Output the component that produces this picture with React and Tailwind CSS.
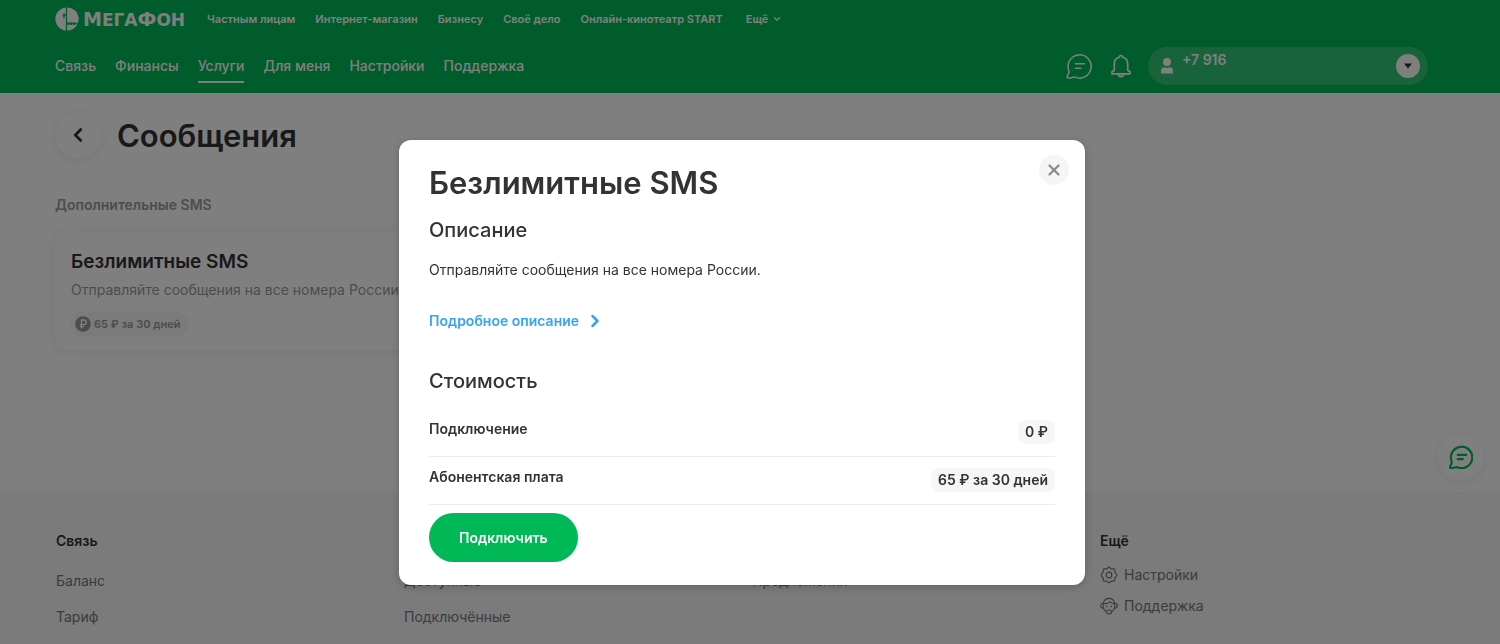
import React, { useState } from 'react';
import { ChevronDown, ChevronLeft, ChevronRight, X } from 'lucide-react';

const topLinks = ['Частным лицам', 'Интернет-магазин', 'Бизнесу', 'Своё дело', 'Онлайн-кинотеатр START'];

const mainLinks = ['Связь', 'Финансы', 'Услуги', 'Для меня', 'Настройки', 'Поддержка'];

const footerColumns = [
  { title: 'Связь', links: ['Баланс', 'Тариф'] },
  { title: 'Услуги', links: ['Доступные', 'Подключённые'] },
  { title: 'Для меня', links: ['Предложения'] },
];

const prices = [
  { label: 'Подключение', value: '0 ₽' },
  { label: 'Абонентская плата', value: '65 ₽ за 30 дней' },
];

const ChatIcon = ({ className, strokeWidth = 1.5 }) => (
  <svg viewBox="0 0 26 26" fill="none" stroke="currentColor" strokeWidth={strokeWidth} strokeLinecap="round" strokeLinejoin="round" className={className}>
    <path d="M2.8 17.6A11.6 11.6 0 1 1 9 24.1C7.5 23.5 5 25.2 2.2 25 1 24.9.8 24 1.3 23.1 2.5 21.3 3.6 19.6 2.8 17.6Z" />
    <path d="M9.5 10.8h9M9.5 15.3h5.5" />
  </svg>
);

const BellIcon = ({ className }) => (
  <svg viewBox="0 0 20 24" fill="none" stroke="currentColor" strokeWidth="1.7" strokeLinejoin="round" className={className}>
    <path d="M8.3 3.2a1.7 1.7 0 0 1 3.4 0c3.2.8 5 3.3 5 6.6v6.4l2.300 1.5v2.1H1v-2.1l2.3-1.5V9.8c0-3.3 1.8-5.8 5-6.6Z" />
    <path d="M7.3 19.8a2.7 2.9 0 0 0 5.4 0" />
  </svg>
);

const UserIcon = ({ className }) => (
  <svg viewBox="0 0 12 16" fill="currentColor" className={className}>
    <circle cx="6" cy="4" r="3.9" />
    <path d="M0 15.5V13c0-2.500 1.500-3.700 3.300-3.700 1.800.8 3.600.8 5.400 0 1.800 0 3.300 1.200 3.300 3.700v2.500Z" />
  </svg>
);

const GearIcon = ({ className }) => (
  <svg viewBox="0 0 18 18" fill="none" stroke="currentColor" strokeWidth="1.2" strokeLinejoin="round" className={className}>
    <path d="M9 1.2c1.2 0 1.5 1.4 2.6 1.7 1 .3 2.1-.6 2.9.2s-.1 1.9.3 2.900c.4 1 2 1.600 2 3s-1.600 2-2 3c-.4 1 .5 2.100-.3 2.900s-1.900-.1-2.900.2c-1.100.3-1.400 1.700-2.600 1.700s-1.500-1.400-2.600-1.700c-1-.3-2.100.6-2.900-.2s.1-1.900-.3-2.900c-.4-1-2-1.600-2-3s1.600-2 2-3c.4-1-.5-2.100.3-2.900s1.900.1 2.900-.2C7.5 2.6 7.8 1.2 9 1.2Z" />
    <circle cx="9" cy="9" r="2.8" />
  </svg>
);

const SupportIcon = ({ className }) => (
  <svg viewBox="0 0 18 18" fill="none" stroke="currentColor" strokeWidth="1.1" strokeLinecap="round" className={className}>
    <path d="M3.3 6.5C3.8 3.4 6 1.4 9 1.4s5.2 2 5.7 5.1" />
    <path d="M3.3 6.2C1.6 6.2.7 7.3.7 8.7s.9 2.5 2.6 2.5ZM14.7 6.2c1.7 0 2.6 1.1 2.6 2.5s-.9 2.5-2.6 2.5Z" />
    <path d="M3.9 6.6c3.6.2 5-.7 6-1.7 1 1.2 2.5 1.7 4.6 1.7M14.4 11.2c-.5 2.2-1.5 3.2-3 3.8M3.6 11.2c.4 1.500 1 2.400 2 3.100" />
    <ellipse cx="9" cy="14.9" rx="2.5" ry="1.9" />
    <path d="M6.7 9.3v.2M11.3 9.3v.2" strokeWidth="1.6" />
  </svg>
);

const RubleIcon = ({ className }) => (
  <svg viewBox="0 0 16 16" className={className}>
    <circle cx="8" cy="8" r="7.8" fill="currentColor" />
    <path d="M6.5 12.5V4h2.3a2.2 2.2 0 0 1 0 4.6h-4M4.8 10.6H9" fill="none" stroke="#fff" strokeWidth="1.4" />
  </svg>
);

const Logo = () => (
  <a href="#" className="flex items-center gap-1 text-white">
    <svg viewBox="0 0 24 24" className="size-6">
      <circle cx="12" cy="12" r="11.6" fill="currentColor" />
      <path d="M11.5 0v8M11.500 13v11M9 8v3.500" stroke="#00b956" strokeWidth="1.2" />
      <path d="M11.500 7v6.500" stroke="#00b956" strokeWidth="1.2" />
      <circle cx="9.2" cy="8" r="1.5" fill="#00b956" />
      <path d="M11.5 16.6h11" stroke="#00b956" strokeWidth="1" />
      <path d="M12.5 16.6h9" stroke="#00b956" strokeWidth="2.6" strokeDasharray="2 .8" />
    </svg>
    <span className="font-['DejaVu_Sans',sans-serif] text-[17px] leading-6 font-bold">
      <span className="text-[19px] leading-6">М</span>ЕГА<span className="text-[19px] leading-6">Ф</span>ОН
    </span>
  </a>
);

const Header = () => (
  <header className="bg-[#00b956] pr-[72px] pb-2 pl-[55px] text-white">
    <div className="flex h-[38px] items-center">
      <Logo />
      <nav className="ml-[22px] flex items-center gap-5 text-[11px] font-semibold">
        {topLinks.map((link) => (
          <a key={link} href="#">{link}</a>
        ))}
        <button type="button" className="ml-[3px] flex items-center gap-1">
          Ещё <ChevronDown size={10} strokeWidth={3} />
        </button>
      </nav>
    </div>
    <div className="mt-[9px] flex h-[38px] items-center">
      <nav className="flex flex-1 gap-[19px] text-sm font-medium">
        {mainLinks.map((link) => (
          <a
            key={link}
            href="#"
            className={`flex h-[34px] items-center border-y-2 border-t-transparent ${
              link === 'Услуги' ? 'border-b-white' : 'border-b-transparent'
            }`}
          >
            {link}
          </a>
        ))}
      </nav>
      <button type="button" aria-label="Чат">
        <ChatIcon className="size-[26px]" />
      </button>
      <button type="button" aria-label="Уведомления" className="mr-[17px] ml-[19px]">
        <BellIcon className="h-6 w-5" />
      </button>
      <button type="button" className="flex h-[38px] w-[280px] items-center rounded-full bg-white/20 pr-2 pl-[13px]">
        <UserIcon className="h-4 w-3" />
        <span className="ml-[9px] flex-1 pb-3 text-left text-sm font-semibold">+7 916</span>
        <span className="flex size-6 items-center justify-center rounded-full bg-white text-[#333]">
          <svg viewBox="0 0 8 6" className="h-[6px] w-2" fill="currentColor">
            <path d="M0 .5h8l-4 5Z" />
          </svg>
        </span>
      </button>
    </div>
  </header>
);

const Services = () => (
  <main className="pt-[19px] pr-[72px] pb-[142px] pl-[55px]">
    <div className="flex items-center gap-4">
      <button type="button" aria-label="Назад" className="flex size-[46px] items-center justify-center rounded-full bg-white shadow-[0_2px_12px_rgba(0,0,0,0.08)]">
        <ChevronLeft size={22} strokeWidth={3} />
      </button>
      <h1 className="pt-[2px] text-[31px] leading-10 font-semibold">Сообщения</h1>
    </div>
    <h2 className="mt-[35px] text-sm leading-6 font-semibold text-[#999]">Дополнительные SMS</h2>
    <div className="mt-[14px] grid grid-cols-2 gap-5">
      <article className="rounded-xl bg-white px-4 pt-[19px] pb-[14px] shadow-[0_1px_12px_rgba(0,0,0,0.08)]">
        <h3 className="text-[19px] leading-6 font-semibold">Безлимитные SMS</h3>
        <p className="mt-1 text-sm leading-6 text-[#999]">Отправляйте сообщения на все номера России.</p>
        <div className="mt-[10px] flex h-6 w-fit items-center gap-[3px] rounded-lg bg-[#f6f6f6] pr-2 pl-1 text-[11px] font-semibold text-[#999]">
          <RubleIcon className="size-4" />
          65 ₽ за 30 дней
        </div>
      </article>
    </div>
  </main>
);

const Footer = () => (
  <footer className="grid flex-1 grid-cols-4 gap-5 bg-[#f6f6f6] pt-[37px] pr-[72px] pb-4 pl-14">
    {footerColumns.map((column) => (
      <div key={column.title}>
        <h4 className="text-sm leading-6 font-semibold">{column.title}</h4>
        <ul className="mt-4 space-y-3 text-sm leading-6 text-[#777]">
          {column.links.map((link) => (
            <li key={link}><a href="#">{link}</a></li>
          ))}
        </ul>
      </div>
    ))}
    <div>
      <h4 className="text-sm leading-6 font-semibold">Ещё</h4>
      <ul className="mt-[10px] space-y-[7px] text-sm leading-6 text-[#777]">
        <li><a href="#" className="flex items-center gap-[6px]"><GearIcon className="size-[18px]" />Настройки</a></li>
        <li><a href="#" className="flex items-center gap-[6px]"><SupportIcon className="size-[18px]" />Поддержка</a></li>
      </ul>
    </div>
  </footer>
);

const ServiceModal = ({ onClose }) => (
  <div className="fixed inset-0 z-10 flex items-start justify-center bg-black/50 pt-[140px] pr-4">
    <div role="dialog" aria-modal="true" aria-labelledby="service-title" className="relative w-full max-w-[686px] rounded-xl bg-white px-[30px] pt-[23px] pb-[23px] shadow-[0_2px_10px_rgba(0,0,0,0.2)]">
      <button type="button" aria-label="Закрыть" onClick={onClose} className="absolute top-[15px] right-4 flex size-[30px] items-center justify-center rounded-full bg-[#f5f5f5] text-[#8c8c8c]">
        <X size={18} strokeWidth={3} />
      </button>
      <h2 id="service-title" className="text-[31px] leading-10 font-semibold">Безлимитные SMS</h2>
      <h3 className="mt-[15px] text-xl leading-6 font-medium">Описание</h3>
      <p className="mt-4 text-sm leading-6">Отправляйте сообщения на все номера России.</p>
      <a href="#" className="mt-[27px] flex items-center gap-[6px] text-sm leading-6 font-semibold text-[#36a5f1]">
        Подробное описание <ChevronRight size={20} strokeWidth={3} />
      </a>
      <h3 className="mt-9 text-xl leading-6 font-medium">Стоимость</h3>
      <dl className="mt-4">
        {prices.map((price) => (
          <div key={price.label} className="flex items-start justify-between border-b border-[#ededed] pt-2 pb-3 text-sm leading-6 font-semibold">
            <dt>{price.label}</dt>
            <dd className="mt-[3px] rounded-lg bg-[#f6f6f6] px-[7px]">{price.value}</dd>
          </div>
        ))}
      </dl>
      <button type="button" className="mt-2 h-[49px] rounded-full bg-[#00b956] px-[30px] text-sm font-semibold text-white">
        Подключить
      </button>
    </div>
  </div>
);

const App = () => {
  const [isOpen, setIsOpen] = useState(true);

  return (
    <div className="flex min-h-screen flex-col bg-white font-[Inter,'Liberation_Sans',sans-serif] text-[#333]">
      <Header />
      <Services />
      <Footer />
      <button type="button" aria-label="Написать в чат" className="fixed right-4 bottom-[164px] flex size-[46px] items-center justify-center rounded-full bg-white text-[#00b956] shadow-[0_2px_12px_rgba(0,0,0,0.08)]">
        <ChatIcon className="size-6" strokeWidth={2.4} />
      </button>
      {isOpen && <ServiceModal onClose={() => setIsOpen(false)} />}
    </div>
  );
};

export default App;
